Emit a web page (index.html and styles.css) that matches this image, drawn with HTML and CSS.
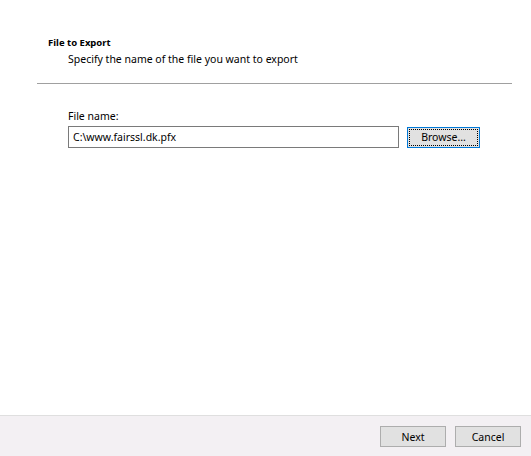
FILE: index.html
```html
<!DOCTYPE html>
<html lang="en">
<head>
  <meta charset="UTF-8" />
  <title>Certificate Export Wizard</title>
  <link rel="stylesheet" href="styles.css">
</head>
<body>
  <div class="wizard">
    <div class="page">
      <header class="head">
        <h1>File to Export</h1>
        <p>Specify the name of the file you want to export</p>
      </header>
      <hr class="divider">
      <section class="content">
        <label for="fileName">File name:</label>
        <div class="file-row">
          <input id="fileName" type="text" value="C:\www.fairssl.dk.pfx">
          <button class="btn browse">Browse...</button>
        </div>
      </section>
    </div>
    <footer class="actions">
      <button class="btn">Next</button>
      <button class="btn">Cancel</button>
    </footer>
  </div>
</body>
</html>
```

FILE: styles.css
```css
body {
  margin: 0;
  background: #fff;
  font-family: "Noto Sans", "Liberation Sans", sans-serif;
  font-size: 10.5px;
  color: #000;
}
.wizard {
  height: 456px;
  display: flex;
  flex-direction: column;
}
.page {
  flex: 1;
}
.head {
  padding: 36px 0 0 48px;
}
.head h1 {
  margin: 0;
  font-size: 9.5px;
  font-weight: bold;
  line-height: 14px;
}
.head p {
  margin: 1px 0 0 20px;
  line-height: 16px;
}
.divider {
  margin: 16px 19px 0 37px;
  border: 0;
  border-top: 1px solid #a0a0a0;
}
.content {
  padding: 24px 0 0 68px;
}
.content label {
  display: block;
  line-height: 16px;
  margin-bottom: 2px;
}
.file-row {
  display: flex;
  align-items: center;
  gap: 8px;
}
.file-row input {
  width: 331px;
  height: 22px;
  box-sizing: border-box;
  border: 1px solid #7a7a7a;
  padding: 0 4px;
  font: inherit;
  margin: 0;
}
.btn {
  font: inherit;
  height: 21px;
  padding: 0;
  background: #e1e1e1;
  border: 1px solid #adadad;
  color: #000;
}
.browse {
  width: 73px;
  border-color: #0078d7;
  outline: 1px dotted #000;
  outline-offset: -3px;
}
.actions {
  height: 41px;
  background: #f3f0f3;
  border-top: 1px solid #dfdfdf;
  display: flex;
  justify-content: flex-end;
  align-items: flex-start;
  gap: 9px;
  padding: 10px 10px 0 0;
  box-sizing: border-box;
}
.actions .btn {
  width: 66px;
}
```
